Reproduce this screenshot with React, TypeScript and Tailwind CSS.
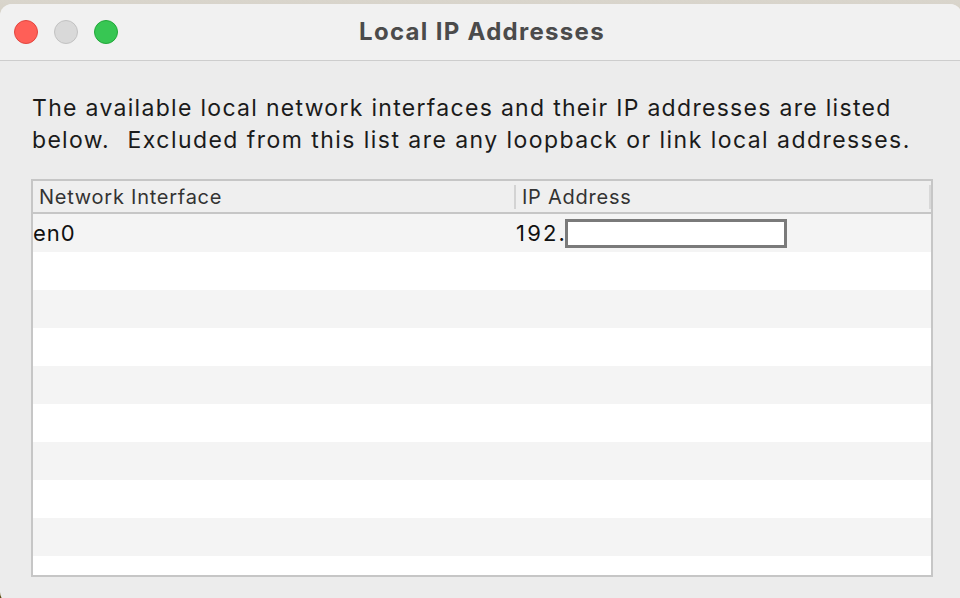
const rows = Array.from({ length: 10 });

function TrafficLights() {
  return (
    <div className="flex items-center gap-[16px] pl-[14px]">
      <div className="h-[24px] w-[24px] rounded-full bg-[#ff5f57] border border-[#e2463f]" />
      <div className="h-[24px] w-[24px] rounded-full bg-[#d9d9d9] border border-[#c2c2c2]" />
      <div className="h-[24px] w-[24px] rounded-full bg-[#37c653] border border-[#22a83a]" />
    </div>
  );
}

export default function App() {
  return (
    <div
      className="h-[598px] w-[960px] overflow-hidden bg-gradient-to-b from-[#d9d5cc] via-[#a89a70] to-[#5c4b12] pt-[4px]"
      style={{ fontFamily: "Inter, 'Liberation Sans', sans-serif" }}
    >
      <div className="flex h-[600px] w-[962px] flex-col overflow-hidden rounded-[12px] bg-[#ececec]">
        {/* Title bar */}
        <div className="grid h-[57px] grid-cols-[1fr_auto_1fr] items-center border-b border-[#cdcdcd] bg-[#f1f1f1]">
          <TrafficLights />
          <div className="pl-[2px] text-[24px] font-bold tracking-[1.3px] text-[#4b4b4b]">
            Local IP Addresses
          </div>
          <div />
        </div>

        {/* Content */}
        <div className="flex w-[960px] flex-col px-[31px] pt-[31px]">
          <p className="pl-[1px] text-[23px] leading-[32px] tracking-[1.3px] text-[#1b1b1b]">
            The available local network interfaces and their IP addresses are listed
            <br />
            below.&nbsp; <span className="pl-[2px] tracking-[1.45px]">Excluded from this list are any loopback or link local addresses.</span>
          </p>

          <div className="mt-[23px] flex h-[398px] w-[902px] flex-col border-2 border-[#c6c6c6] bg-white">
            {/* Header */}
            <div className="flex h-[33px] shrink-0 items-center border-b-2 border-[#c6c6c6] bg-[#efefef] text-[20px] tracking-[0.75px] text-[#333333]">
              <div className="w-[481px] pl-[6px]">Network Interface</div>
              <div className="h-[24px] w-[2px] bg-[#d3d3d3]" />
              <div className="flex-1 pl-[6px]">IP Address</div>
              <div className="h-[24px] w-[2px] bg-[#d8d8d8]" />
            </div>

            {/* Rows */}
            <div className="flex flex-1 flex-col overflow-hidden">
              {rows.map((_, i) => (
                <div
                  key={i}
                  className={`flex h-[38px] shrink-0 items-center text-[22px] text-[#111111] ${
                    i % 2 === 0 ? "bg-[#f4f4f4]" : "bg-white"
                  }`}
                >
                  {i === 0 && (
                    <>
                      <div className="w-[482px] tracking-[1px]">en0</div>
                      <div className="flex flex-1 items-center pl-[1px]">
                        <span className="w-[49px] tracking-[2.2px]">192.</span>
                        <div className="h-[29px] w-[222px] border-[3px] border-[#7a7a7a] bg-white" />
                      </div>
                    </>
                  )}
                </div>
              ))}
            </div>
          </div>
        </div>
      </div>
    </div>
  );
}
